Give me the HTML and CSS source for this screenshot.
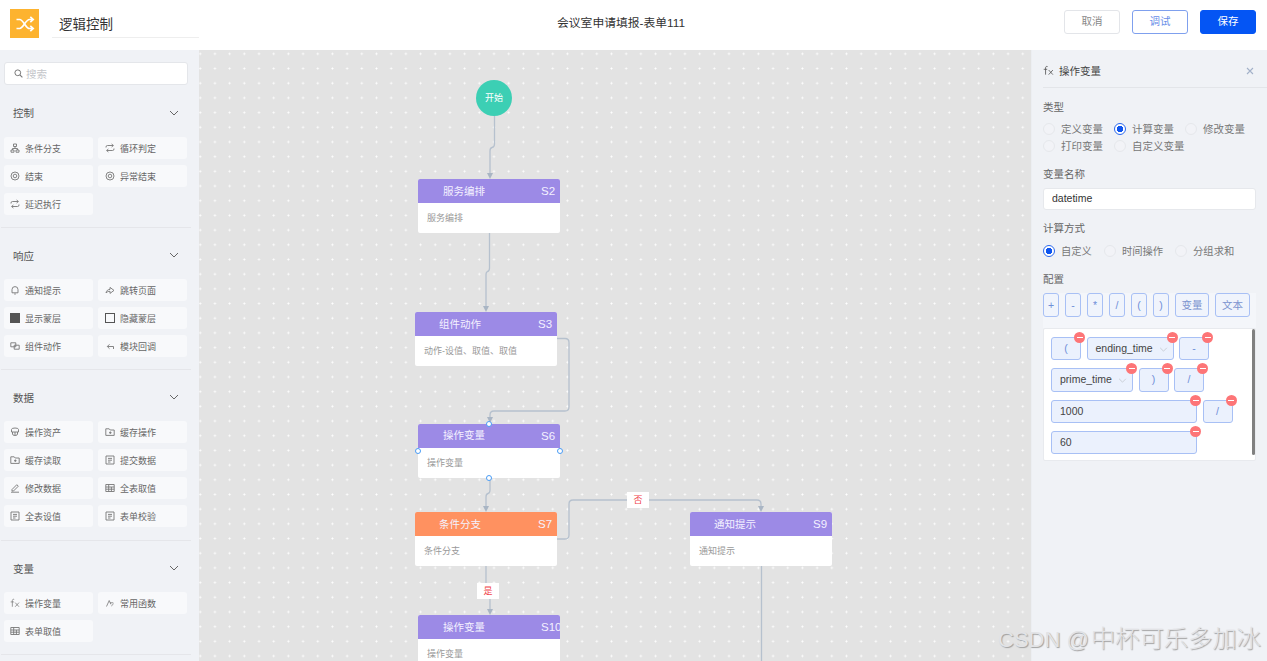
FILE: index.html
```html
<!DOCTYPE html>
<html lang="zh">
<head>
<meta charset="utf-8">
<title>逻辑控制</title>
<link rel="stylesheet" href="styles.css">
</head>
<body>
<svg class="defs" width="0" height="0" aria-hidden="true">
  <symbol id="i-tree" viewBox="0 0 10 10"><path d="M3.500 1h3v2.500h-3zM1 7h3v2.200H1zM6 7h3v2.200H6zM5 3.500V5.500M2.500 7V5.500h5V7" fill="none" stroke="currentColor" stroke-width=".9"/></symbol>
  <symbol id="i-loop" viewBox="0 0 10 10"><path d="M1 4.500V4a1.500 1.500 0 0 1 1.500-1.500H8.200M6.600 1 8.400 2.500 6.600 4M9 5.500V6A1.500 1.500 0 0 1 7.500 7.500H1.800M3.400 6 1.600 7.500 3.400 9" fill="none" stroke="currentColor" stroke-width=".9"/></symbol>
  <symbol id="i-end" viewBox="0 0 10 10"><circle cx="5" cy="5" r="4" fill="none" stroke="currentColor" stroke-width=".9"/><circle cx="5" cy="5" r="1.800" fill="none" stroke="currentColor" stroke-width=".9"/></symbol>
  <symbol id="i-bell" viewBox="0 0 10 10"><path d="M2 7.800V4.600a3 3 0 0 1 6 0v3.200zM4.200 9h1.600" fill="none" stroke="currentColor" stroke-width=".9"/></symbol>
  <symbol id="i-jump" viewBox="0 0 10 10"><path d="M1 8c.4-2.400 2-3.600 4-3.600V2.400l4 3-4 3V6.300C3.400 6.300 2 6.800 1 8z" fill="none" stroke="currentColor" stroke-width=".9"/></symbol>
  <symbol id="i-comp" viewBox="0 0 10 10"><path d="M.8 1.800h5v4h-5zM4.200 4.200h5v4h-5z" fill="none" stroke="currentColor" stroke-width=".9"/></symbol>
  <symbol id="i-back" viewBox="0 0 10 10"><path d="M8.500 8V5.500H2.500M4.500 3.300 2.300 5.500l2.200 2.200" fill="none" stroke="currentColor" stroke-width=".9"/></symbol>
  <symbol id="i-db" viewBox="0 0 10 10"><path d="M1.500 2.500a3.500 1.500 0 0 1 7 0V5h-7zM2.500 5v2a2.500 1.500 0 0 0 5 0V5M5 5v3" fill="none" stroke="currentColor" stroke-width=".9"/></symbol>
  <symbol id="i-folder" viewBox="0 0 10 10"><path d="M.8 1.800h3.400l1 1.200h4v5.400H.8zM4 5.700h2.600M5.300 4.400v2.600" fill="none" stroke="currentColor" stroke-width=".9"/></symbol>
  <symbol id="i-form" viewBox="0 0 10 10"><path d="M1 1h8v8H1zM3 3.400h4M3 5.200h4M3 7h2.500" fill="none" stroke="currentColor" stroke-width=".9"/></symbol>
  <symbol id="i-edit" viewBox="0 0 10 10"><path d="M2 6.500 6.800 1.700l1.500 1.500L3.500 8H2zM1 9.200h8" fill="none" stroke="currentColor" stroke-width=".9"/></symbol>
  <symbol id="i-table" viewBox="0 0 10 10"><path d="M.8 1.500h8.400v7H.8zM.8 4h8.400M.8 6.200h8.400M3.700 1.500v7M6.400 4v4.500" fill="none" stroke="currentColor" stroke-width=".9"/></symbol>
  <symbol id="i-func" viewBox="0 0 10 10"><path d="M1.500 8.500 4.200 2.500l1.600 3.800M5 4.800h3.300M6.300 8 8.600 5.800" fill="none" stroke="currentColor" stroke-width=".8"/></symbol>
  <symbol id="i-fx" viewBox="0 0 12 11"><path d="M5 1.200C3.800.7 2.800 1.200 2.800 2.600V10M.8 4.200h3.800M6.200 5 10.800 10M10.800 5 6.200 10" fill="none" stroke="currentColor" stroke-width=".9"/></symbol>
  <symbol id="i-chev" viewBox="0 0 10 6"><path d="M1 1l4 4 4-4" fill="none" stroke="currentColor" stroke-width="1"/></symbol>
</svg>

<div class="app">
  <header class="topbar">
    <div class="logo">
      <svg class="logo-icon" viewBox="0 0 20 20"><path d="M1.500 5.500h3.200c3.600 0 6 9 9.800 9h3.500M1.500 14.500h3.200c3.600 0 6-9 9.800-9h3.500M15.300 2.800 18.200 5.500l-2.900 2.700M15.300 11.800l2.900 2.700-2.900 2.700" fill="none" stroke="#fff" stroke-width="1.700"/></svg>
    </div>
    <div class="page-name">逻辑控制</div>
    <div class="page-title">会议室申请填报-表单111</div>
    <div class="actions">
      <button class="btn">取消</button>
      <button class="btn btn-outline">调试</button>
      <button class="btn btn-primary">保存</button>
    </div>
  </header>

  <div class="workspace">
    <aside class="sidebar">
      <div class="search">
        <svg class="search-icon" viewBox="0 0 10 10"><circle cx="4.200" cy="4.200" r="3.200" fill="none" stroke="currentColor" stroke-width="1.100"/><path d="M6.600 6.600 9.300 9.300" stroke="currentColor" stroke-width="1.200"/></svg>
        <span>搜索</span>
      </div>

      <section class="group">
        <div class="group-head"><span>控制</span><svg class="chev"><use href="#i-chev"/></svg></div>
        <div class="items">
          <div class="item"><svg class="ic"><use href="#i-tree"/></svg>条件分支</div>
          <div class="item"><svg class="ic"><use href="#i-loop"/></svg>循环判定</div>
          <div class="item"><svg class="ic"><use href="#i-end"/></svg>结束</div>
          <div class="item"><svg class="ic"><use href="#i-end"/></svg>异常结束</div>
          <div class="item"><svg class="ic"><use href="#i-loop"/></svg>延迟执行</div>
        </div>
      </section>

      <section class="group">
        <div class="group-head"><span>响应</span><svg class="chev"><use href="#i-chev"/></svg></div>
        <div class="items">
          <div class="item"><svg class="ic"><use href="#i-bell"/></svg>通知提示</div>
          <div class="item"><svg class="ic"><use href="#i-jump"/></svg>跳转页面</div>
          <div class="item"><span class="sq sq-fill"></span>显示蒙层</div>
          <div class="item"><span class="sq"></span>隐藏蒙层</div>
          <div class="item"><svg class="ic"><use href="#i-comp"/></svg>组件动作</div>
          <div class="item"><svg class="ic"><use href="#i-back"/></svg>模块回调</div>
        </div>
      </section>

      <section class="group group-data">
        <div class="group-head"><span>数据</span><svg class="chev"><use href="#i-chev"/></svg></div>
        <div class="items">
          <div class="item"><svg class="ic"><use href="#i-db"/></svg>操作资产</div>
          <div class="item"><svg class="ic"><use href="#i-folder"/></svg>缓存操作</div>
          <div class="item"><svg class="ic"><use href="#i-folder"/></svg>缓存读取</div>
          <div class="item"><svg class="ic"><use href="#i-form"/></svg>提交数据</div>
          <div class="item"><svg class="ic"><use href="#i-edit"/></svg>修改数据</div>
          <div class="item"><svg class="ic"><use href="#i-table"/></svg>全表取值</div>
          <div class="item"><svg class="ic"><use href="#i-form"/></svg>全表设值</div>
          <div class="item"><svg class="ic"><use href="#i-form"/></svg>表单校验</div>
        </div>
      </section>

      <section class="group">
        <div class="group-head"><span>变量</span><svg class="chev"><use href="#i-chev"/></svg></div>
        <div class="items">
          <div class="item"><svg class="ic"><use href="#i-fx"/></svg>操作变量</div>
          <div class="item"><svg class="ic"><use href="#i-func"/></svg>常用函数</div>
          <div class="item"><svg class="ic"><use href="#i-table"/></svg>表单取值</div>
        </div>
      </section>
    </aside>

    <main class="canvas">
      <svg class="edges" viewBox="199 50 832 611" width="832" height="611">
        <g class="edge">
          <path d="M494.500 116V144Q494.500 147 492 147.500Q490 148 490 151V174"/>
          <path d="M489.500 233V268Q489.500 271 487.500 271.500Q486 272 486 275V307"/>
          <path d="M557 338.500H565Q569 338.500 569 342.500V407Q569 411 565 411H494Q490 411 490 415V418"/>
          <path d="M490 477V490Q490 493 488 493.500Q486 494 486 497V507"/>
          <path d="M557 539H565Q569 539 569 535V504Q569 500 573 500H757Q761 500 761 504V507"/>
          <path d="M486 566V585"/>
          <path d="M490 599V610"/>
          <path d="M761.500 566V661"/>
        </g>
        <g class="arrow">
          <path d="M487 173h6l-3 6z"/>
          <path d="M483 306h6l-3 6z"/>
          <path d="M487 417h6l-3 6z"/>
          <path d="M483 506h6l-3 6z"/>
          <path d="M758 506h6l-3 6z"/>
          <path d="M487 609h6l-3 6z"/>
        </g>
      </svg>

      <div class="start">开始</div>

      <div class="node node-s2 node-inset"><div class="node-head"><span>服务编排</span><b>S2</b></div><div class="node-body">服务编排</div></div>
      <div class="node node-s3"><div class="node-head"><span>组件动作</span><b>S3</b></div><div class="node-body">动作-设值、取值、取值</div></div>
      <div class="node node-s6 node-inset"><div class="node-head"><span>操作变量</span><b>S6</b></div><div class="node-body">操作变量</div>
        <i class="anchor a-top"></i><i class="anchor a-left"></i><i class="anchor a-right"></i><i class="anchor a-bottom"></i>
      </div>
      <div class="node node-s7 node-orange"><div class="node-head"><span>条件分支</span><b>S7</b></div><div class="node-body">条件分支</div></div>
      <div class="node node-s9"><div class="node-head"><span>通知提示</span><b>S9</b></div><div class="node-body">通知提示</div></div>
      <div class="node node-s10 node-inset"><div class="node-head"><span>操作变量</span><b>S10</b></div><div class="node-body">操作变量</div></div>

      <div class="edge-label label-no">否</div>
      <div class="edge-label label-yes">是</div>
    </main>

    <aside class="panel">
      <div class="panel-head">
        <svg class="panel-fx"><use href="#i-fx"/></svg>
        <span>操作变量</span>
        <svg class="panel-close" viewBox="0 0 8 8"><path d="M1 1l6 6M7 1 1 7" stroke="currentColor" stroke-width="1.100"/></svg>
      </div>

      <div class="label label-type">类型</div>
      <div class="radios radios-wrap">
        <div class="radio"><i></i>定义变量</div>
        <div class="radio on"><i></i>计算变量</div>
        <div class="radio"><i></i>修改变量</div>
        <div class="radio"><i></i>打印变量</div>
        <div class="radio"><i></i>自定义变量</div>
      </div>

      <div class="label label-wide">变量名称</div>
      <div class="input">datetime</div>

      <div class="label">计算方式</div>
      <div class="radios radios-calc">
        <div class="radio on"><i></i>自定义</div>
        <div class="radio"><i></i>时间操作</div>
        <div class="radio"><i></i>分组求和</div>
      </div>

      <div class="label label-wide">配置</div>
      <div class="ops">
        <div class="op">+</div><div class="op">-</div><div class="op">*</div><div class="op">/</div><div class="op">(</div><div class="op">)</div>
        <div class="op op-text">变量</div><div class="op op-text">文本</div>
      </div>

      <div class="expr">
        <div class="expr-row">
          <div class="tok tok-sym">(<i class="del"></i></div>
          <div class="tok tok-ending">ending_time<svg class="tok-chev"><use href="#i-chev"/></svg><i class="del"></i></div>
          <div class="tok tok-sym">-<i class="del"></i></div>
        </div>
        <div class="expr-row">
          <div class="tok tok-prime">prime_time<svg class="tok-chev"><use href="#i-chev"/></svg><i class="del"></i></div>
          <div class="tok tok-sym">)<i class="del"></i></div>
          <div class="tok tok-sym">/<i class="del"></i></div>
        </div>
        <div class="expr-row">
          <div class="tok tok-num">1000<i class="del"></i></div>
          <div class="tok tok-sym">/<i class="del"></i></div>
        </div>
        <div class="expr-row">
          <div class="tok tok-num">60<i class="del"></i></div>
        </div>
        <div class="scrollbar"></div>
      </div>
    </aside>
  </div>

  <div class="watermark"><span class="wm-latin">CSDN @</span>中杯可乐多加冰</div>
</div>
</body>
</html>
```

FILE: styles.css
```css
* { box-sizing: border-box; }
html, body { margin: 0; height: 100%; overflow: hidden; }
body {
  font-family: "Liberation Sans", "Noto Sans CJK SC", sans-serif;
  color: #333;
  background: #f0f2f6;
}
.defs { position: absolute; }
.app { position: relative; width: 1267px; height: 661px; display: flex; flex-direction: column; overflow: hidden; }

/* top bar */
.topbar { position: relative; flex: 0 0 50px; background: #fff; display: flex; align-items: center; padding: 0 11px 0 10px; }
.logo { width: 29px; height: 29px; margin-top: -3px; background: #fdb32f; display: flex; align-items: center; justify-content: center; }
.logo-icon { width: 20px; height: 20px; }
.page-name { width: 147px; height: 29px; margin: -3px 0 0 13px; padding-left: 7px; font-size: 13.500px; line-height: 31px; color: #333; border-bottom: 1px solid #eee; }
.page-title { position: absolute; left: 557px; top: 15px; font-size: 11.800px; line-height: 16px; color: #333; white-space: nowrap; }
.actions { margin-left: auto; margin-top: -6px; display: flex; gap: 12px; }
.btn { width: 56px; height: 24px; padding: 0 0 3px; font: inherit; font-size: 10.500px; color: #888; background: #fff; border: 1px solid #e3e5e9; border-radius: 3px; }
.btn-outline { color: #6a8fe8; border-color: #7fa0ee; }
.btn-primary { color: #fff; background: #0455f4; border-color: #0455f4; }

.workspace { flex: 1; display: flex; min-height: 0; }

/* left sidebar */
.sidebar { flex: 0 0 199px; padding: 12px 8px 0 0; background: #f0f2f6; overflow: hidden; }
.search { height: 23px; margin-left: 4px; margin-right: 3px; padding-left: 9px; display: flex; align-items: center; gap: 3px; font-size: 10.500px; color: #c4c6ca; background: #fff; border: 1px solid #e4e6ea; border-radius: 3px; }
.search-icon { width: 9px; height: 9px; color: #777; }
.search + .group { margin-top: 1px; }
.search + .group .group-head span { margin-top: 2px; }
.group { padding-bottom: 12px; border-bottom: 1px solid #e5e6ea; margin-left: 1px; }
.group-data { padding-bottom: 13px; }
.group-head { height: 51px; padding: 0 12px 0 12px; display: flex; align-items: center; justify-content: space-between; font-size: 10.500px; color: #555; }
.group-head span { margin-top: 4px; }
.chev { width: 10px; height: 6px; margin-top: 3px; color: #666; }
.items { display: grid; grid-template-columns: 89px 89px; gap: 6px 5px; margin-left: 3px; }
.item { height: 22px; padding-left: 6px; display: flex; align-items: center; gap: 5px; font-size: 9px; color: #666; background: #f8f9fb; border-radius: 3px; white-space: nowrap; }
.item:nth-child(even) { padding-left: 7px; }
.ic { flex: none; width: 10px; height: 10px; color: #777; }
.sq { flex: none; width: 10px; height: 10px; border: 1px solid #555; }
.sq-fill { background: #555; }

/* canvas */
.canvas {
  position: relative;
  flex: 0 0 832px;
  overflow: hidden;
  background-color: #e3e3e3;
  background-image: radial-gradient(circle at center, #fff 0, #fff .8px, transparent 1.200px);
  background-size: 14.700px 14.700px;
  background-position: -6.100px -3.500px;
}
.edges { position: absolute; left: 0; top: 0; }
.edge path { fill: none; stroke: #b6c1ce; stroke-width: 1.300; }
.arrow path { fill: #a9b5c4; }
.start { position: absolute; left: 277px; top: 30px; width: 36px; height: 36px; border-radius: 50%; background: #3ccfb4; color: #fff; font-size: 9px; line-height: 36px; text-align: center; }
.node { position: absolute; width: 142px; height: 54px; background: #fff; border-radius: 2px; }
.node-head { height: 24px; padding: 0 6px 0 24px; display: flex; align-items: center; justify-content: space-between; background: #9c8ae6; color: #f4f1ff; font-size: 10.500px; border-radius: 2px 2px 0 0; overflow: hidden; white-space: nowrap; }
.node-head span { margin-top: -2px; }
.node-inset .node-head { padding-left: 25px; }
.node-head b { flex: none; width: 13px; font-weight: 400; font-size: 11.500px; }
.node-orange .node-head { background: #ff9160; }
.node-body { padding-left: 9px; font-size: 9px; line-height: 31px; color: #999; }
.node-s2 { left: 219px; top: 129px; }
.node-s3 { left: 216px; top: 262px; }
.node-s6 { left: 219px; top: 373.500px; }
.node-s7 { left: 216px; top: 462px; }
.node-s9 { left: 491px; top: 462px; }
.node-s10 { left: 219px; top: 565px; }
.anchor { position: absolute; width: 6px; height: 6px; border-radius: 50%; background: #fff; border: 1px solid #4a9cf5; }
.a-top { left: 68px; top: -3px; }
.a-bottom { left: 68px; bottom: -3px; }
.a-left { left: -3px; top: 24px; }
.a-right { right: -3px; top: 24px; }
.edge-label { position: absolute; width: 22px; height: 16px; background: #fff; color: #f0424a; font-size: 9px; line-height: 16px; text-align: center; }
.label-no { left: 428px; top: 442px; }
.label-yes { left: 278px; top: 533px; }

/* right panel */
.panel { flex: 1; min-width: 0; padding: 0 11px 0 11px; background: #f0f2f6; border-left: 1px solid #eceef2; }
.panel-head { height: 38px; margin-right: -11px; display: flex; align-items: center; font-size: 10.500px; color: #444; border-bottom: 1px solid #e3e5e9; padding-top: 4px; }
.panel-fx { width: 11px; height: 11px; margin-right: 5px; color: #555; }
.panel-close { width: 8px; height: 8px; margin-left: auto; margin-right: 13px; color: #a3b1c9; }
.label { height: 18px; font-size: 10.500px; line-height: 18px; color: #666; margin-top: 9px; }
.label-type { margin-top: 10px; }
.label-wide { margin-top: 11px; }
.radios { display: flex; gap: 12px; margin-top: 4px; }
.radios-wrap { flex-wrap: wrap; gap: 0 11px; margin-top: 4px; width: 213px; }
.radios-calc { margin-top: 5px; }
.radios-calc .radio { font-size: 10.300px; }
.radio { height: 17px; display: flex; align-items: center; gap: 6px; font-size: 10.500px; color: #777; white-space: nowrap; }
.radio i { width: 12px; height: 12px; border-radius: 50%; border: 1px solid #e6e8ec; background: #f2f3f7; }
.radio.on i { border-color: #2c69ee; background: radial-gradient(circle, #0f55ee 0, #0f55ee 3px, #fff 3.500px); }
.input { height: 22px; margin-top: 5px; padding-left: 8px; font-size: 10.500px; line-height: 19px; color: #333; background: #fff; border: 1px solid #e6e8ec; border-radius: 3px; }
.ops { display: flex; gap: 6px; height: 35px; margin-top: 5px; background: #f4f6fa; }
.op { width: 16px; height: 24px; font-size: 10.500px; line-height: 22px; text-align: center; color: #6f8fd8; background: #f0f4fc; border: 1px solid #a8c0f5; border-radius: 3px; }
.op-text { width: 34px; color: #7b93cf; }
.op-text:last-child { width: 35px; }
.expr { position: relative; width: 213px; height: 133px; padding: 8px 0 0 7px; background: #fff; border: 1px solid #e8eaee; border-radius: 2px; }
.expr-row { display: flex; gap: 5.500px; margin-bottom: 8px; }
.tok { position: relative; height: 23px; padding-left: 8px; font-size: 10.500px; line-height: 21px; color: #444; background: #ebf1fd; border: 1px solid #a8c0f5; border-radius: 3px; white-space: nowrap; }
.expr-row:nth-child(2) .tok { height: 24px; }
.tok-sym { width: 30px; padding: 0; text-align: center; color: #6f8fd8; }
.tok-ending { width: 87px; }
.tok-prime { width: 82px; }
.tok-num { width: 146px; }
.tok-chev { position: absolute; right: 5px; top: 9px; width: 9px; height: 5px; color: #c4c8d0; }
.del { position: absolute; right: -5px; top: -6px; width: 11px; height: 11px; border-radius: 50%; background: #fd7577; }
.del::after { content: ""; position: absolute; left: 2.500px; right: 2.500px; top: 5px; height: 1px; background: #fff; }
.scrollbar { position: absolute; right: 0; top: 0; width: 3px; height: 126px; background: #808080; border-radius: 2px; }

/* watermark */
.watermark { position: absolute; left: 998px; top: 623px; font-size: 24.300px; font-weight: 300; line-height: 32px; color: #e2e3e6; text-shadow: 1px 1px 1px #a0a0a0; white-space: nowrap; pointer-events: none; }
.wm-latin { font-size: 22px; margin-right: 2px; }
```
